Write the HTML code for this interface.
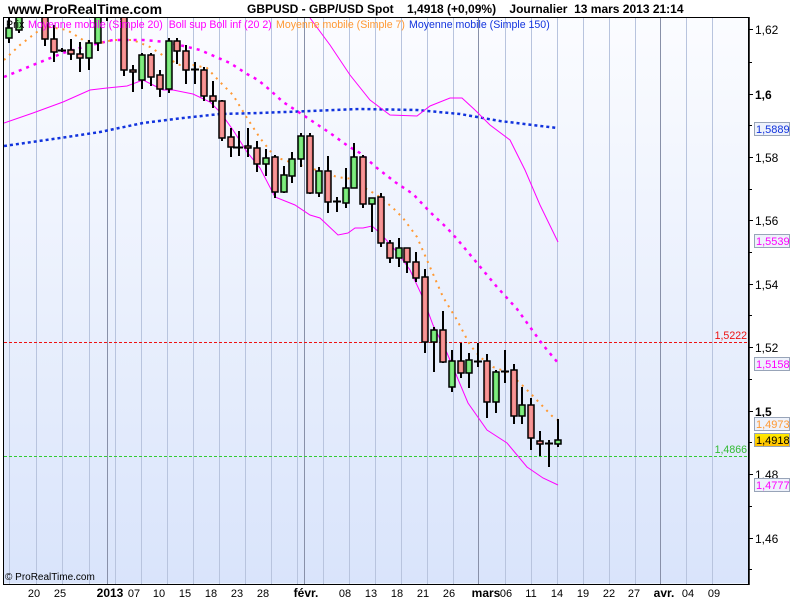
<!DOCTYPE html>
<html><head><meta charset="utf-8"><style>
html,body{margin:0;padding:0;background:#fff;}
body{width:800px;height:600px;overflow:hidden;position:relative;font-family:"Liberation Sans",Arial,sans-serif;}
svg{position:absolute;left:0;top:0;}
</style></head><body>
<svg width="800" height="600" viewBox="0 0 800 600" xmlns="http://www.w3.org/2000/svg">
<defs>
<linearGradient id="bg" x1="0" y1="0" x2="0" y2="1"><stop offset="0" stop-color="#fbfcff"/><stop offset="1" stop-color="#d9e4fb"/></linearGradient>
<linearGradient id="rd" x1="0" y1="0" x2="1" y2="0"><stop offset="0" stop-color="#e86a6a"/><stop offset="0.5" stop-color="#f8a0a0"/><stop offset="1" stop-color="#e86a6a"/></linearGradient>
<linearGradient id="gr" x1="0" y1="0" x2="1" y2="0"><stop offset="0" stop-color="#4ccc4c"/><stop offset="0.5" stop-color="#8cf08c"/><stop offset="1" stop-color="#4ccc4c"/></linearGradient>
<linearGradient id="yl" x1="0" y1="0" x2="0" y2="1"><stop offset="0" stop-color="#ffee00"/><stop offset="1" stop-color="#ffbb00"/></linearGradient>
<clipPath id="pc"><rect x="4" y="17" width="745" height="567"/></clipPath>
</defs>
<text x="8" y="14" font-size="14" font-weight="bold" fill="#000">www.ProRealTime.com</text>
<text x="247" y="13" font-size="12" font-weight="bold" fill="#000" xml:space="preserve">GBPUSD - GBP/USD Spot    1,4918 (+0,09%)    Journalier  13 mars 2013 21:14</text>
<rect x="3.5" y="17.5" width="745" height="566" fill="url(#bg)" stroke="none"/>
<g stroke="#b8c4de" stroke-width="1">
<path d="M9.5 18V584M36.5 18V584M62.5 18V584M89.5 18V584M115.5 18V584M141.5 18V584M167.5 18V584M193.5 18V584M219.5 18V584M245.5 18V584M271.5 18V584M297.5 18V584M323.5 18V584M349.5 18V584M375.5 18V584M401.5 18V584M427.5 18V584M453.5 18V584M505.5 18V584M531.5 18V584M557.5 18V584M583.5 18V584M609.5 18V584M635.5 18V584M686.5 18V584M712.5 18V584"/>
</g>
<g stroke="#8890a8" stroke-width="1"><path d="M107.5 18V584M304.5 18V584M478.5 18V584M660.5 18V584"/></g>
<g clip-path="url(#pc)">
<line x1="4" y1="342.5" x2="748" y2="342.5" stroke="#ee1111" stroke-dasharray="3,2"/>
<line x1="4" y1="456.5" x2="748" y2="456.5" stroke="#33cc33" stroke-dasharray="3,2"/>
<polyline fill="none" stroke="#1133dd" stroke-width="2.5" stroke-dasharray="3,3" points="4,146 67,137 100,132 143,123 183,118 220,114 260,113 310,111 360,109 417,110 460,114 500,121 557,128"/>
<polyline fill="none" stroke="#ff00ff" stroke-width="2.5" stroke-dasharray="3,5" points="4,77 33,65 63,53 87,46 113,40 143,40 167,42 200,50 230,63 247,74 258,80 270,90 283,102 300,113 318,125 330,133 348,146 360,153 377,168 395,182 413,194 430,212 447,228 457,239 477,263 497,287 517,309 530,327 543,345 558,363"/>
<polyline fill="none" stroke="#ff9933" stroke-width="2" stroke-dasharray="2,5" points="4,60 20,45 37,32 50,27 67,30 83,40 100,43 113,40 133,40 150,47 167,58 180,65 193,65 207,68 220,82 233,95 247,118 260,138 275,157 293,163 310,168 323,172 337,177 353,179 363,187 377,195 392,207 403,218 417,237 430,267 443,297 457,320 470,345 480,357 493,367 507,372 520,383 532,395 552,416 558,420"/>
<polyline fill="none" stroke="#ff00ff" stroke-width="1" points="4,123 33,113 63,102 90,90 107,88 127,86 143,80 153,85 163,90 173,90 193,94 210,102 220,112 233,130 247,152 260,168 275,197 295,205 310,215 320,218 338,235 348,233 355,228 363,228 372,226 380,233 397,252 410,270 423,298 433,325 447,353 468,403 487,430 507,443 527,467 543,478 558,485"/>
<polyline fill="none" stroke="#ff00ff" stroke-width="1" points="310,18 330,45 350,75 370,100 390,115 417,116 430,106 450,98 462,98 475,110 490,125 510,140 525,170 540,205 558,242"/>
<g stroke="#000" stroke-width="2">
<path d="M9 17V43M19 17V33M45 17V46M54 25V62M62 48V52M71 39V60M80 42V72M89 40V70M98 17V51M107 17V21M124 17V76M133 65V92M142 53V89M151 53V86M160 70V97M169 38V93M177 38V64M186 45V84M195 62V84M204 67V101M213 81V108M222 100V141M231 128V157M239 131V156M248 128V157M257 141V172M266 149V176M275 155V198M284 166V193M292 152V183M301 133V167M310 133V194M319 167V197M328 156V213M337 197V212M346 168V208M354 143V188M363 155V208M372 198V232M381 193V247M390 240V263M399 238V267M407 248V273M416 252V282M425 269V353M434 327V372M443 311V363M452 350V392M461 343V378M469 353V388M478 343V367M487 354V418M496 370V413M505 350V383M514 364V424M522 387V424M531 398V450M540 431V456M549 440V467M558 419V447"/>
<path d="M58 50.5H66M191 69.5H199M233 147.5H243M333 201.5H341M474 361.5H482M501 371.5H509M545 443.5H553"/>
</g>
<g stroke="#000" stroke-width="1.5">
<rect x="6" y="28" width="6" height="10" fill="url(#gr)"/>
<rect x="16" y="10" width="6" height="20" fill="url(#gr)"/>
<rect x="42" y="10" width="6" height="29" fill="url(#rd)"/>
<rect x="51" y="39" width="6" height="13" fill="url(#rd)"/>
<rect x="68" y="50" width="6" height="4" fill="url(#rd)"/>
<rect x="77" y="54" width="6" height="4" fill="url(#rd)"/>
<rect x="86" y="43" width="6" height="15" fill="url(#gr)"/>
<rect x="95" y="10" width="6" height="33" fill="url(#gr)"/>
<rect x="121" y="10" width="6" height="60" fill="url(#rd)"/>
<rect x="130" y="70" width="6" height="2" fill="url(#rd)"/>
<rect x="139" y="55" width="6" height="25" fill="url(#gr)"/>
<rect x="148" y="55" width="6" height="22" fill="url(#rd)"/>
<rect x="157" y="75" width="6" height="14" fill="url(#rd)"/>
<rect x="166" y="41" width="6" height="48" fill="url(#gr)"/>
<rect x="174" y="41" width="6" height="10" fill="url(#rd)"/>
<rect x="183" y="51" width="6" height="19" fill="url(#rd)"/>
<rect x="201" y="70" width="6" height="26" fill="url(#rd)"/>
<rect x="210" y="96" width="6" height="5" fill="url(#rd)"/>
<rect x="219" y="101" width="6" height="37" fill="url(#rd)"/>
<rect x="228" y="137" width="6" height="10" fill="url(#rd)"/>
<rect x="245" y="146" width="6" height="2" fill="url(#rd)"/>
<rect x="254" y="148" width="6" height="16" fill="url(#rd)"/>
<rect x="263" y="158" width="6" height="6" fill="url(#gr)"/>
<rect x="272" y="157" width="6" height="35" fill="url(#rd)"/>
<rect x="281" y="175" width="6" height="17" fill="url(#gr)"/>
<rect x="289" y="159" width="6" height="17" fill="url(#gr)"/>
<rect x="298" y="136" width="6" height="23" fill="url(#gr)"/>
<rect x="307" y="136" width="6" height="57" fill="url(#rd)"/>
<rect x="316" y="171" width="6" height="22" fill="url(#gr)"/>
<rect x="325" y="171" width="6" height="31" fill="url(#rd)"/>
<rect x="343" y="188" width="6" height="15" fill="url(#gr)"/>
<rect x="351" y="157" width="6" height="31" fill="url(#gr)"/>
<rect x="360" y="157" width="6" height="47" fill="url(#rd)"/>
<rect x="369" y="198" width="6" height="6" fill="url(#gr)"/>
<rect x="378" y="197" width="6" height="46" fill="url(#rd)"/>
<rect x="387" y="243" width="6" height="15" fill="url(#rd)"/>
<rect x="396" y="248" width="6" height="10" fill="url(#gr)"/>
<rect x="404" y="248" width="6" height="14" fill="url(#rd)"/>
<rect x="413" y="262" width="6" height="16" fill="url(#rd)"/>
<rect x="422" y="277" width="6" height="65" fill="url(#rd)"/>
<rect x="431" y="330" width="6" height="12" fill="url(#gr)"/>
<rect x="440" y="330" width="6" height="32" fill="url(#rd)"/>
<rect x="449" y="361" width="6" height="26" fill="url(#gr)"/>
<rect x="458" y="361" width="6" height="12" fill="url(#rd)"/>
<rect x="466" y="360" width="6" height="13" fill="url(#gr)"/>
<rect x="484" y="361" width="6" height="41" fill="url(#rd)"/>
<rect x="493" y="372" width="6" height="30" fill="url(#gr)"/>
<rect x="511" y="370" width="6" height="46" fill="url(#rd)"/>
<rect x="519" y="405" width="6" height="11" fill="url(#gr)"/>
<rect x="528" y="405" width="6" height="33" fill="url(#rd)"/>
<rect x="537" y="441" width="6" height="3" fill="url(#rd)"/>
<rect x="555" y="440" width="6" height="4" fill="url(#gr)"/>
</g>
</g>
<g font-size="10.6">
<text x="6" y="28" fill="#000">Prix</text>
<text x="28" y="28" fill="#ff00ff" xml:space="preserve">Moyenne mobile (Simple 20)  Boll sup Boll inf (20 2)</text>
<text x="276" y="28" fill="#ff9933">Moyenne mobile (Simple 7)</text>
<text x="409" y="28" fill="#1133dd">Moyenne mobile (Simple 150)</text>
<text x="747" y="339" fill="#ee1111" text-anchor="end">1,5222</text>
<text x="747" y="453" fill="#33bb33" text-anchor="end">1,4866</text>
</g>
<path d="M3.5 17.5H748.5V584.5H3.5Z" fill="none" stroke="#000" stroke-width="1"/>
<line x1="749" y1="17" x2="749" y2="585" stroke="#000" stroke-width="1.5"/>
<g stroke="#000" stroke-width="1"><path d="M749 29.5H753M749 62.5H752M749 94.5H753M749 125.5H752M749 157.5H753M749 189.5H752M749 220.5H753M749 252.5H752M749 284.5H753M749 315.5H752M749 347.5H753M749 379.5H752M749 411.5H753M749 442.5H752M749 474.5H753M749 506.5H752M749 538.5H753M749 569.5H752"/></g>
<g font-size="12" fill="#000">
<text x="755" y="34">1,62</text>
<text x="755" y="99" font-weight="bold">1,6</text>
<text x="755" y="162">1,58</text>
<text x="755" y="225">1,56</text>
<text x="755" y="289">1,54</text>
<text x="755" y="352">1,52</text>
<text x="755" y="416" font-weight="bold">1,5</text>
<text x="755" y="479">1,48</text>
<text x="755" y="543">1,46</text>
</g>
<g font-size="11" stroke-width="1">
<rect x="754.5" y="122.5" width="35" height="13" fill="#eef2fb" stroke="#98a4b8"/><text x="756" y="133" fill="#1133dd">1,5889</text>
<rect x="754.5" y="234.5" width="35" height="13" fill="#eef2fb" stroke="#98a4b8"/><text x="756" y="245" fill="#ff00ff">1,5539</text>
<rect x="754.5" y="357.5" width="35" height="13" fill="#eef2fb" stroke="#98a4b8"/><text x="756" y="368" fill="#ff00ff">1,5158</text>
<rect x="754.5" y="417.5" width="35" height="13" fill="#eef2fb" stroke="#98a4b8"/><text x="756" y="428" fill="#ff9933">1,4973</text>
<rect x="754.5" y="433.5" width="35" height="13" fill="url(#yl)" stroke="#98a4b8"/><text x="756" y="444" fill="#000">1,4918</text>
<rect x="754.5" y="478.5" width="35" height="13" fill="#eef2fb" stroke="#98a4b8"/><text x="756" y="489" fill="#ff00ff">1,4777</text>
</g>
<text x="5" y="580" font-size="10" fill="#000" font-family="'Liberation Sans Narrow','Liberation Sans',sans-serif">© ProRealTime.com</text>
<g font-size="11" fill="#000" text-anchor="middle" font-family="'Liberation Sans Narrow','Liberation Sans',sans-serif">
<text x="34" y="597">20</text><text x="60" y="597">25</text>
<text x="110" y="597" font-weight="bold" font-size="12">2013</text>
<text x="134" y="597">07</text><text x="159" y="597">10</text><text x="185" y="597">15</text><text x="211" y="597">18</text><text x="237" y="597">23</text><text x="263" y="597">28</text>
<text x="306" y="597" font-weight="bold" font-size="12">févr.</text>
<text x="345" y="597">08</text><text x="371" y="597">13</text><text x="397" y="597">18</text><text x="423" y="597">21</text><text x="449" y="597">26</text>
<text x="486" y="597" font-weight="bold" font-size="12">mars</text>
<text x="506" y="597">06</text><text x="531" y="597">11</text><text x="557" y="597">14</text><text x="583" y="597">19</text><text x="609" y="597">22</text><text x="634" y="597">27</text>
<text x="664" y="597" font-weight="bold" font-size="12">avr.</text>
<text x="688" y="597">04</text><text x="714" y="597">09</text>
</g>
</svg>
</body></html>
